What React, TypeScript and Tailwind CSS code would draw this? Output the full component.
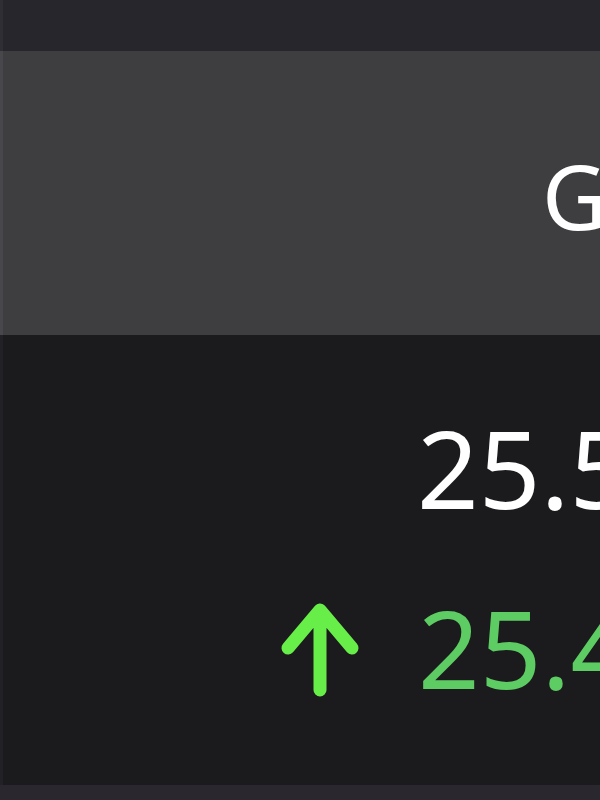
export default function App() {
  return (
    <div
      className="flex h-[800px] w-[600px] flex-col overflow-hidden bg-[#1b1b1e] text-white"
      style={{ fontFamily: '"Noto Sans", "Open Sans", sans-serif' }}
    >
      <div className="h-[51px] shrink-0 border-l-[3px] border-[#302e35] bg-[#28262d]" />
      <div className="h-[284px] shrink-0 overflow-hidden border-l-[3px] border-[#48474b] bg-[#3e3e40] pt-[100px] pl-[539px]">
        <span className="whitespace-nowrap text-[89px] leading-none">GBP</span>
      </div>
      <div className="flex h-[450px] shrink-0 flex-col overflow-hidden border-l-[3px] border-[#222226] pt-[79px]">
        <div className="whitespace-nowrap pl-[414px] text-[108px] leading-none">25.50</div>
        <div className="mt-[72px] flex items-center whitespace-nowrap pl-[273px]">
          <svg width="88" height="104" viewBox="0 0 88 104" className="mt-[4px] shrink-0">
            <path
              d="M44 12V92M12 50L44 12L76 50"
              fill="none"
              stroke="#68ee48"
              strokeWidth="13"
              strokeLinecap="round"
              strokeLinejoin="round"
            />
          </svg>
          <span className="ml-[54px] text-[108px] leading-none text-[#5dcc63]">25.40</span>
        </div>
      </div>
      <div className="flex-1 bg-[#2a282e]" />
    </div>
  );
}
